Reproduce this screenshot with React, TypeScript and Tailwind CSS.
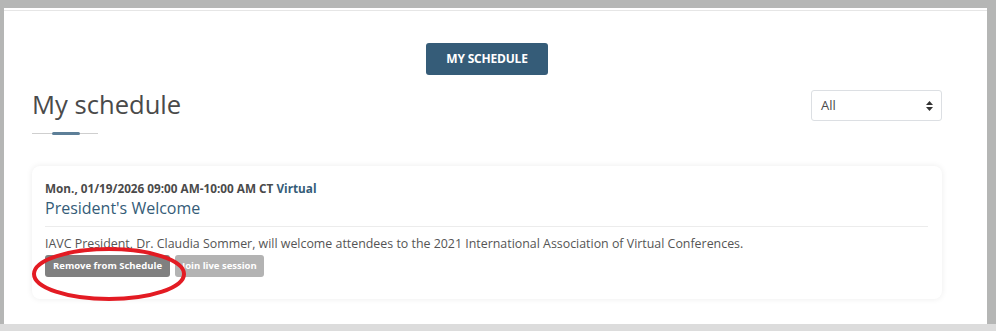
const session = {
  date: 'Mon., 01/19/2026 09:00 AM-10:00 AM CT',
  mode: 'Virtual',
  title: "President's Welcome",
  description:
    'IAVC President, Dr. Claudia Sommer, will welcome attendees to the 2021 International Association of Virtual Conferences.',
};

function SelectArrows() {
  return (
    <svg width="7" height="10" viewBox="0 0 7 10" className="fill-[#333]">
      <path d="M3.5 0 L7 4 H0 Z" />
      <path d="M3.5 10 L0 6 H7 Z" />
    </svg>
  );
}

export default function App() {
  return (
    <div className="flex h-[331px] w-[996px] flex-col bg-[#b5b6b5] font-['Open_Sans',sans-serif]">
      <div className="ml-[4px] mr-[9px] mt-[8px] h-[316px] bg-white">
        <div className="mt-[2px] h-px bg-[#e6e6e6]" />

        <div className="flex justify-center pr-[17px] pt-[32px]">
          <button className="h-[32px] w-[122px] rounded-[3px] bg-[#355c78] text-[12px] font-bold tracking-[-0.2px] text-white">
            MY SCHEDULE
          </button>
        </div>

        <div className="flex items-start justify-between pl-[28px] pr-[45px] pt-[13px]">
          <div>
            <h1 className="text-[25.6px] leading-[34px] text-[#4a4a4a]">My schedule</h1>
            <div className="mt-[10px] flex h-[3px] w-[66px] items-center bg-[linear-gradient(#fff_1px,#cfcfcf_1px,#cfcfcf_2px,#fff_2px)]">
              <div className="ml-[20px] h-[3px] w-[28px] rounded-full bg-[#5d7f98]" />
            </div>
          </div>
          <div className="mt-[2px] flex h-[31px] w-[131px] items-center justify-between rounded-[3px] border border-[#dcdfe3] pl-[9px] pr-[8px] text-[13px] text-[#4a4a4a]">
            <span>All</span>
            <SelectArrows />
          </div>
        </div>

        <div className="relative ml-[28px] mr-[45px] mt-[31px] rounded-[8px] bg-white px-[13px] pb-[22px] pt-[14px] shadow-[0_0_6px_rgba(0,0,0,0.08)]">
          <p className="text-[11.75px] font-bold leading-[16px] text-[#4a4a4a]">
            {session.date} <span className="text-[#355c78]">{session.mode}</span>
          </p>
          <h2 className="text-[16px] leading-[24px] text-[#355c78]">{session.title}</h2>
          <div className="mr-[1px] mt-[6px] h-px bg-[#ececec]" />
          <p className="mt-[8px] text-[12.4px] leading-[18px] text-[#555]">{session.description}</p>
          <div className="mt-[2px] flex gap-[5px]">
            <button className="h-[22px] rounded-[3px] bg-[#808080] px-[8px] text-[9.5px] font-bold text-white">
              Remove from Schedule
            </button>
            <button className="h-[22px] rounded-[3px] bg-[#b3b3b3] px-[7px] text-[9.5px] font-bold text-white">
              Join live session
            </button>
          </div>

          <svg className="pointer-events-none absolute left-[-1px] top-[80px]" width="156" height="56" viewBox="0 0 156 56">
            <ellipse cx="78" cy="28" rx="75" ry="25" fill="none" stroke="#e31b23" strokeWidth="4" />
          </svg>
        </div>
      </div>
      <div className="flex-1 bg-[#dcdcdc]" />
    </div>
  );
}
